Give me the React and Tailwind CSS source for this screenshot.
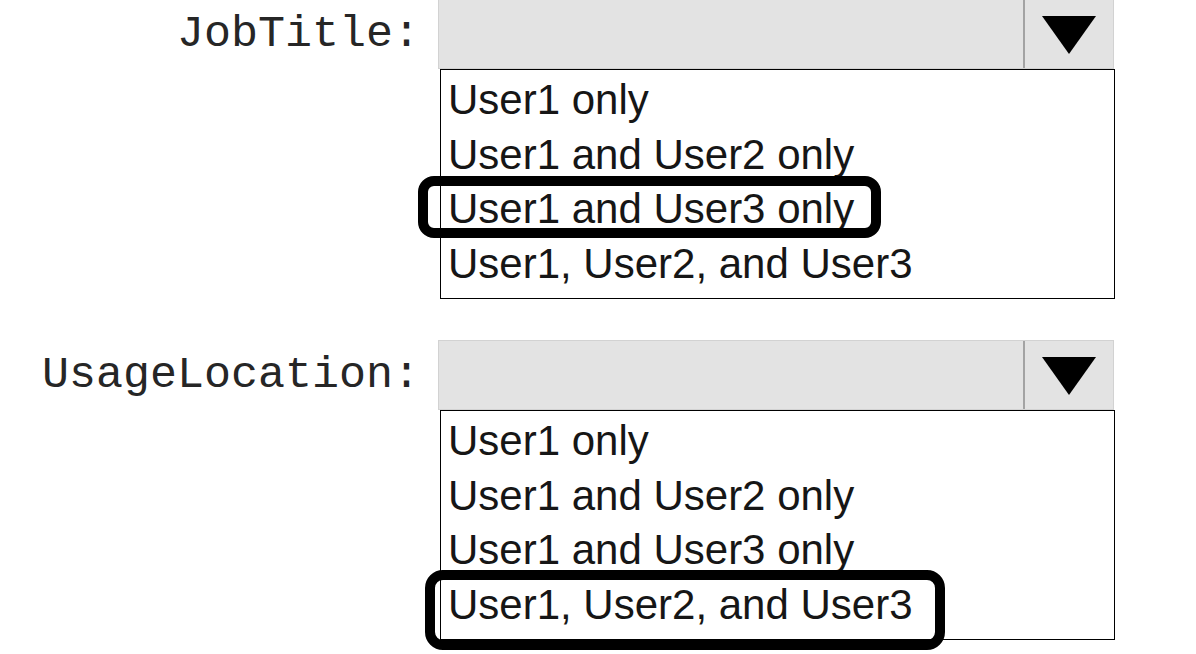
const OPTIONS = [
  "User1 only",
  "User1 and User2 only",
  "User1 and User3 only",
  "User1, User2, and User3",
];

function Arrow() {
  return (
    <svg width="54" height="38" viewBox="0 0 54 38">
      <polygon points="0,0 54,0 27,38" fill="#000" />
    </svg>
  );
}

function Dropdown({ label, className }) {
  return (
    <div className={`flex ${className || ""}`}>
      <div className="w-[422px] h-[70px] flex items-center justify-end pr-[2px] text-[45px] text-[#262626] font-['Liberation_Mono','Courier_New',monospace] leading-none">
        {label}
      </div>
      <div className="ml-[16px] w-[676px]">
        <div className="h-[70px] flex bg-[#e3e3e3] border border-[#d2d2d2]">
          <div className="flex-1" />
          <div className="w-[90px] border-l-2 border-[#a3a3a3] flex items-center justify-center pt-[2px]">
            <Arrow />
          </div>
        </div>
        <div className="ml-[2px] w-[675px] h-[230px] border-[1.5px] border-black bg-white pt-[3px] pl-[7px] font-['Liberation_Sans',Arial,sans-serif] text-[42px] leading-[54.5px] text-[#161616]">
          {OPTIONS.map((o) => (
            <div key={o} className="whitespace-nowrap">{o}</div>
          ))}
        </div>
      </div>
    </div>
  );
}

export default function App() {
  return (
    <div className="relative w-[1196px] h-[654px] bg-white overflow-hidden">
      <div className="-mt-[1px]">
        <Dropdown label="JobTitle:" />
        <Dropdown label="UsageLocation:" className="mt-[41px]" />
      </div>
      {/* answer markings */}
      <div className="absolute left-[418px] top-[176px] w-[463px] h-[62px] border-[10px] border-black rounded-[16px]" />
      <div className="absolute left-[425px] top-[570px] w-[520px] h-[80px] border-[10px] border-black rounded-[18px]" />
    </div>
  );
}
